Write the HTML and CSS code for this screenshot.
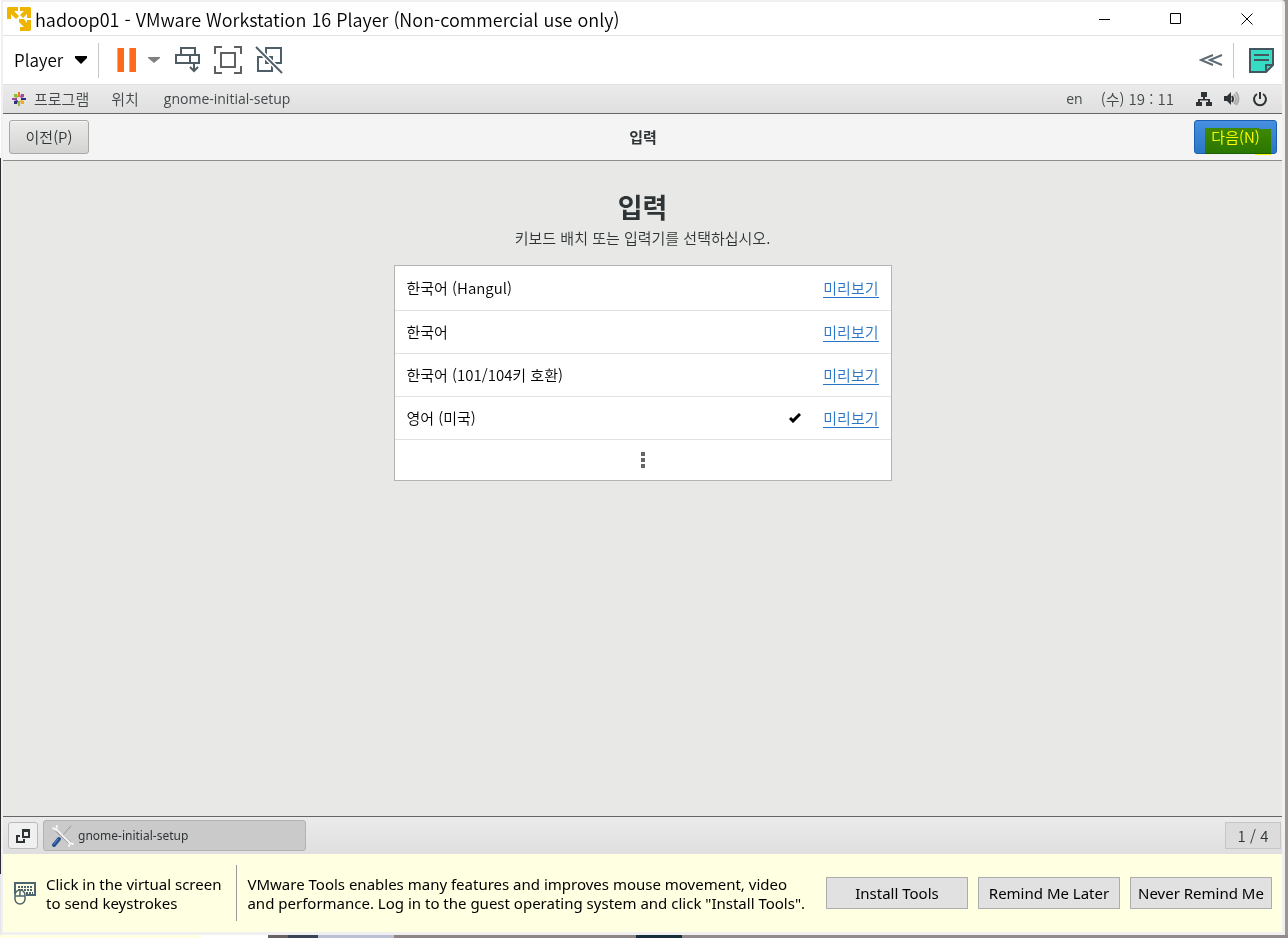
FILE: index.html
```html
<!DOCTYPE html>
<html lang="ko">
<head>
<meta charset="utf-8">
<title>hadoop01 - VMware Workstation 16 Player</title>
<link rel="stylesheet" href="styles.css">
</head>
<body>
<div class="window">
  <header class="titlebar">
    <svg class="logo" width="24" height="24" viewBox="0 0 24 24" fill="#efb400">
      <path d="M1 0h10v4H7l5 5-3 3-5-5v5H0V1zM13 0h10l1 1v10h-4V7l-4 4-3-3 4-4h-4zM12 12h5l3 4v-3h4v10l-1 1H13v-4h4l-5-5z"/>
    </svg>
    <h1 class="title">hadoop01 - VMware Workstation 16 Player (Non-commercial use only)</h1>
    <div class="controls">
      <button class="control" aria-label="Minimize"><svg width="12" height="12" stroke="#000" fill="none"><path d="M0 6.500h11"/></svg></button>
      <button class="control" aria-label="Maximize"><svg width="12" height="12" stroke="#000" fill="none"><path d="M.5 .5h10v10h-10z"/></svg></button>
      <button class="control" aria-label="Close"><svg width="12" height="12" stroke="#000" fill="none"><path d="M.5 .5l11 11M11.500 .5l-11 11"/></svg></button>
    </div>
  </header>

  <nav class="toolbar">
    <button class="tool player">Player <svg width="12" height="8"><path d="M0 0h12v2L6 8 0 2z"/></svg></button>
    <span class="divider"></span>
    <button class="tool pause" aria-label="Suspend"><svg width="20" height="26"><path fill="#c9b5aa" d="M0 1h7v24H0zM12 1h7v24h-7z"/><path fill="#ff6a1a" d="M1 1h6v24H1zM13 1h6v24h-6z"/></svg></button>
    <button class="tool more" aria-label="Power options"><svg width="12" height="7" fill="#808080"><path d="M0 0h12v1L6 6 0 1z"/></svg></button>
    <button class="tool keys" aria-label="Send Ctrl+Alt+Del"><svg width="26" height="26" fill="none" stroke="#505c64" stroke-width="2"><path d="M6 8V1h14v7M1 8h23v8H1zM15 8v8M19 16v8M15 20l4 4 4-4"/></svg></button>
    <button class="tool full" aria-label="Full screen"><svg width="28" height="28" fill="none" stroke="#606060" stroke-width="2"><path d="M7 7h14v14H7zM1 8V1h7M20 1h7v7M27 20v7h-7M8 27H1v-7"/></svg></button>
    <button class="tool unity" aria-label="Unity"><svg width="28" height="28" fill="none" stroke="#4f5f69" stroke-width="2"><path d="M11 2h15v15H11zM3 11h14v14H3z"/><path stroke="#fff" stroke-width="5" d="M1 1l26 26"/><path d="M1 1l26 26"/></svg></button>
    <span class="space"></span>
    <button class="tool" aria-label="Collapse"><svg width="24" height="12" fill="none" stroke="#5d6b75" stroke-width="2"><path d="M14 1L2 6l12 5M23 1L11 6l12 5"/></svg></button>
    <span class="divider right"></span>
    <button class="tool notes" aria-label="Notes"><svg width="25" height="25" stroke="#44565e" stroke-width="2"><path fill="#37dcc4" d="M1 1h23v16l-7 7H1z"/><path fill="none" d="M5 7h15M5 12h15M17 24v-7h7"/></svg></button>
  </nav>

  <main class="guest">
    <div class="panel">
      <svg class="flower" width="14" height="14" viewBox="0 0 14 14">
        <path fill="#e67c20" d="M6 0h2v5H6z"/><path fill="#9c4b9b" d="M0 6h5v2H0z"/><path fill="#8fbd38" d="M2 2h3l1 3-1 1-3-1zM6 9h2v5H6z"/><path fill="#a64ca0" d="M9 2h3v3l-3 1-1-1z"/><path fill="#302d82" d="M2 9l3-1 1 1-1 3H2zM9 6h5v2H9z"/><path fill="#f1a82c" d="M8 9l1-1 3 1v3H9z"/>
      </svg>
      <a class="menu" href="#">프로그램</a>
      <a class="menu" href="#">위치</a>
      <a class="menu app" href="#">gnome-initial-setup</a>
      <span class="space"></span>
      <span class="lang">en</span>
      <time class="clock">(수) 19 : 11</time>
      <svg class="tray" width="16" height="16" fill="#2e3436"><path d="M5 1h6v5H9v2h5v3h2v4h-6v-4h2V9.500H4V11h2v4H0v-4h2V8h5V6H5z"/></svg>
      <svg class="tray" width="16" height="16"><path fill="#2e3436" d="M0 5h3l4-4v13l-4-4H0z"/><path fill="none" stroke="#2e3436" stroke-width="2" d="M8 5q2 3 0 6"/><path fill="none" stroke="#aaa" stroke-width="2" d="M10 3q4 5 0 10M12 1q5 7 0 13"/></svg>
      <svg class="tray" width="16" height="16" fill="none" stroke="#2e3436" stroke-width="2"><path d="M5 3a6 6 0 1 0 6 0M8 1v7"/></svg>
    </div>

    <div class="assistant">
      <button class="step back">이전(P)</button>
      <strong class="heading">입력</strong>
      <div class="next-wrap">
        <button class="step next">다음(N)</button>
        <span class="marker"></span>
      </div>
    </div>

    <section class="page">
      <h2 class="page-title">입력</h2>
      <p class="hint">키보드 배치 또는 입력기를 선택하십시오.</p>
      <ul class="layouts">
        <li class="row first"><span class="name">한국어 (Hangul)</span><a class="preview" href="#">미리보기</a></li>
        <li class="row"><span class="name">한국어</span><a class="preview" href="#">미리보기</a></li>
        <li class="row"><span class="name">한국어 (101/104키 호환)</span><a class="preview" href="#">미리보기</a></li>
        <li class="row"><span class="name">영어 (미국)</span><svg class="check" width="12" height="10" fill="none" stroke="#000" stroke-width="3"><path d="M1 5l3 3 7-7"/></svg><a class="preview" href="#">미리보기</a></li>
        <li class="row last"><button class="expand" aria-label="더 보기"><svg width="4" height="16" fill="#666"><path d="M0 0h4v4H0zM0 6h4v4H0zM0 12h4v4H0z"/></svg></button></li>
      </ul>
    </section>

    <div class="taskbar">
      <button class="switcher" aria-label="Show desktop"><svg width="14" height="14" fill="#2e3436"><path fill-rule="evenodd" d="M6 0h8v9H6zM8 3v4h4V3z"/><path d="M0 6h4v2H2v4h5v-2h2v4H0z"/></svg></button>
      <button class="task">
        <svg width="24" height="24" viewBox="0 0 24 24" fill="none" stroke-linecap="round"><path stroke="#999" stroke-width="1" d="M11 12l9-10"/><path stroke="#909090" stroke-width="3" d="M5 6l14 13"/><path stroke="#f4f4f4" stroke-width="2" d="M5 5l14 14M2 4l3 2 1-4M18 22l1-3 3 1"/><path stroke="#244f91" stroke-width="4" d="M3 21l5-6"/><path stroke="#5d91d6" stroke-width="1" d="M3 20l4-5"/></svg>
        gnome-initial-setup</button>
      <span class="space"></span>
      <span class="workspace">1 / 4</span>
    </div>
  </main>

  <footer class="message">
    <svg class="input-icon" width="22" height="23" fill="none" stroke="#4f6570" stroke-width="2"><path d="M12 13h9V1H1v11"/><path stroke-dasharray="2 1" stroke-width="2" d="M4 5h15M4 8h15M12 11h7"/><path fill="#ffffe1" stroke-width="1.500" d="M1 13a4 4 0 0 1 10 0v4a5 5 0 0 1-10 0z"/><path stroke-width="1.500" d="M1 14h10M6 7v7"/></svg>
    <p class="note">Click in the virtual screen<br>to send keystrokes</p>
    <span class="rule"></span>
    <p class="note about">VMware Tools enables many features and improves mouse movement, video<br>and performance. Log in to the guest operating system and click "Install Tools".</p>
    <div class="actions">
      <button class="action">Install Tools</button>
      <button class="action">Remind Me Later</button>
      <button class="action">Never Remind Me</button>
    </div>
  </footer>
</div>
</body>
</html>
```
FILE: styles.css
```css
* { box-sizing: border-box; }
body {
  margin: 0;
  min-height: 100vh;
  display: flex;
  padding: 0 3px 3px 1px;
  font-family: "Noto Sans CJK KR", "Noto Sans", sans-serif;
  font-size: 15px;
  line-height: 20px;
  color: #2e3436;
  background:
    linear-gradient(90deg, #ffffe1 0 202px, #fff 202px 268px, #686064 268px 288px, #3c4359 288px 318px, #bbc1d2 318px 394px, #8e8586 394px 636px, #162e3b 636px 682px, #91898a 682px) bottom / 100% 3px no-repeat,
    linear-gradient(#fff 0 158px, #2b2b30 158px 874px, #e5e5e5 874px) left / 1px 100% no-repeat,
    #9b9691;
}
button { font: inherit; color: inherit; border: 0; padding: 0; margin: 0; background: none; }
a { color: inherit; text-decoration: none; }
svg { display: block; flex: none; }
.space { flex: 1; }
.window {
  flex: 1;
  display: flex;
  flex-direction: column;
  min-width: 0;
  border: solid #f0f0f0;
  border-width: 2px 3px 3px 2px;
  border-top-right-radius: 4px;
  background: #fff;
}
.titlebar {
  display: flex;
  height: 34px;
  align-items: center;
  padding-left: 4px;
  border-bottom: 1px solid #e2e2e2;
}
.title {
  flex: 1;
  margin: 0 0 0 4px;
  font: 350 18px/24px "Noto Sans CJK KR", sans-serif;
  color: #000;
}
.controls { display: flex; }
.control { width: 71px; height: 32px; display: grid; place-items: center; }
.toolbar {
  display: flex;
  align-items: center;
  height: 49px;
  padding: 0 8px 0 11px;
  border-bottom: 1px solid #e2e2e2;
}
.tool { display: flex; align-items: center; }
.player { font: 350 17px/24px "Noto Sans CJK KR", sans-serif; color: #000; gap: 12px; }
.divider { width: 1px; height: 35px; background: #c8c8c8; margin: 0 18px 0 11px; }
.divider.right { margin: 0 15px 0 10px; }
.more { margin-left: 11px; }
.keys { margin-left: 15px; }
.full { margin-left: 13px; }
.unity { margin-left: 13px; }
.guest { flex: 1; display: flex; flex-direction: column; background: #e8e8e6; }
.panel {
  display: flex;
  align-items: center;
  height: 29px;
  padding: 0 14px 0 9px;
  background: linear-gradient(#ebebeb, #dfdfdf);
  border-bottom: 1px solid #666;
  color: #43494b;
  font-weight: 350;
}
.menu { margin-left: 22px; }
.flower + .menu { margin-left: 8px; }
.app { margin-left: 25px; font: 400 14px/20px "Open Sans", sans-serif; }
.lang { font: 400 14px/20px "Open Sans", sans-serif; }
.clock { margin: 0 8px 0 18px; }
.tray { margin-left: 12px; }
.clock + .tray { margin-left: 14px; }
.assistant {
  display: grid;
  grid-template-columns: 1fr auto 1fr;
  align-items: center;
  height: 47px;
  padding: 0 5px 0 6px;
  background: #f4f4f4;
  border-bottom: 1px solid #8e8e88;
}
.step { height: 34px; border: 1px solid #a8a8a4; border-radius: 3px; font-weight: 350; }
.back {
  width: 80px;
  background: linear-gradient(#ebebea, #d3d3d1);
  box-shadow: inset 0 1px #f6f6f6;
}
.heading { font-size: 15px; font-weight: 700; }
.next-wrap { position: relative; justify-self: end; width: 83px; height: 34px; }
.next {
  width: 100%;
  color: #fff;
  border-color: #1d5fae;
  background: linear-gradient(#478fe0, #2a76c6);
}
.marker { position: absolute; inset: 8px 6px -1px 11px; background: #ff0; mix-blend-mode: multiply; clip-path: polygon(0 0, 54px 0, 54px 1px, 100% 1px, 100% 100%, 50px 100%, 50px 26px, 0 26px); }
.page { flex: 1; display: flex; flex-direction: column; align-items: center; padding-top: 26px; }
.page-title { margin: 0; font-size: 27px; line-height: 40px; font-weight: 700; }
.hint { margin: 0; line-height: 22px; font-weight: 350; }
.layouts {
  list-style: none;
  width: 498px;
  max-width: 100%;
  margin: 16px 0 0;
  padding: 0;
  border: 1px solid #b4b4b2;
  background: #fff;
  color: #000;
}
.row {
  display: flex;
  align-items: center;
  height: 43px;
  padding: 0 12px;
  border-bottom: 1px solid #e2e2e2;
}
.first { height: 45px; }
.last { height: 40px; border: 0; justify-content: center; }
.name { flex: 1; font-weight: 350; }
.check { margin-right: 22px; }
.preview { color: #2a76c6; border-bottom: 1px solid #2a76c6; line-height: 19px; font-weight: 350; }
.expand { padding: 4px; }
.taskbar {
  display: flex;
  align-items: center;
  height: 38px;
  padding: 0 1px 0 5px;
  background: linear-gradient(#ebebeb, #dfdfdf);
  border-top: 1px solid #666;
}
.switcher {
  width: 30px;
  height: 27px;
  display: grid;
  place-items: center;
  border: 1px solid #bbb;
  border-radius: 3px;
  background: #f0f0f0;
}
.task {
  display: flex;
  align-items: center;
  gap: 3px;
  width: 263px;
  height: 31px;
  margin-left: 5px;
  padding-left: 7px;
  border: 1px solid #b2b2b2;
  border-radius: 3px;
  background: #cacaca;
  font: 400 12px/20px "Noto Sans", sans-serif;
}
.workspace {
  width: 56px;
  line-height: 25px;
  border: 1px solid #c6c6c6;
  background: #dcdcdc;
  text-align: center;
  font-weight: 350;
}
.message {
  display: flex;
  align-items: center;
  height: 78px;
  padding: 0 10px 0 11px;
  background: #ffffe1;
  color: #000;
  font: 400 15px/19px "Noto Sans", sans-serif;
}
.note { margin: 0 0 0 10px; padding-top: 2px; white-space: nowrap; }
.rule { width: 1px; height: 56px; margin-left: 15px; background: #9a9a9a; }
.actions { display: flex; gap: 10px; margin-left: auto; }
.action {
  width: 142px;
  height: 32px;
  border: 1px solid #adadad;
  background: #e1e1e1;
}
```
